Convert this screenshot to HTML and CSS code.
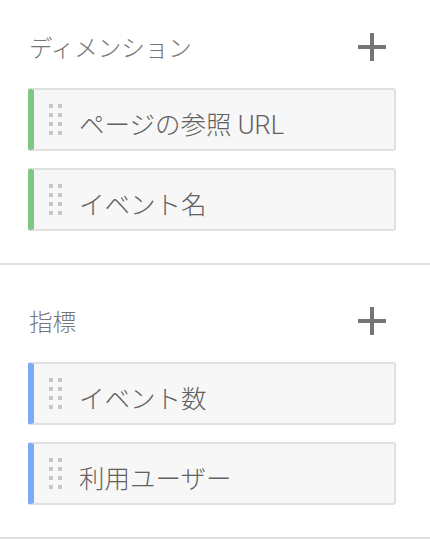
FILE: index.html
```html
<!DOCTYPE html>
<html lang="ja">
<head>
<meta charset="utf-8">
<link rel="stylesheet" href="styles.css">
</head>
<body>
<section class="section section-first">
  <div class="header">
    <span class="title">ディメンション</span>
    <svg class="add" viewBox="0 0 24 24" width="48" height="48"><path d="M19 13h-6v6h-2v-6H5v-2h6V5h2v6h6v2z"/></svg>
  </div>
  <div class="card card-dim">
    <span class="handle"><i></i><i></i><i></i><i></i><i></i><i></i><i></i><i></i></span>
    <span class="label">ページの参照 URL</span>
  </div>
  <div class="card card-dim">
    <span class="handle"><i></i><i></i><i></i><i></i><i></i><i></i><i></i><i></i></span>
    <span class="label">イベント名</span>
  </div>
</section>
<section class="section">
  <div class="header">
    <span class="title">指標</span>
    <svg class="add" viewBox="0 0 24 24" width="48" height="48"><path d="M19 13h-6v6h-2v-6H5v-2h6V5h2v6h6v2z"/></svg>
  </div>
  <div class="card card-met">
    <span class="handle"><i></i><i></i><i></i><i></i><i></i><i></i><i></i><i></i></span>
    <span class="label">イベント数</span>
  </div>
  <div class="card card-met">
    <span class="handle"><i></i><i></i><i></i><i></i><i></i><i></i><i></i><i></i></span>
    <span class="label">利用ユーザー</span>
  </div>
</section>
</body>
</html>
```
FILE: styles.css
```css
html, body {
  margin: 0;
  padding: 0;
  background: #ffffff;
}
body {
  font-family: Roboto, "Noto Sans CJK JP", sans-serif;
  width: 430px;
}
.section {
  display: flex;
  flex-direction: column;
  gap: 17px;
  padding: 32px 34px 32px 28px;
  border-bottom: 2px solid #e0e0e0;
}
.section-first {
  padding-top: 23px;
}
.header {
  display: flex;
  align-items: center;
  justify-content: space-between;
  height: 48px;
}
.title {
  font-size: 23.5px;
  font-weight: 300;
  color: #757575;
  padding-left: 1px;
}
.add {
  fill: #757575;
  display: block;
}
.card {
  display: flex;
  align-items: center;
  height: 59px;
  background: #f7f7f7;
  border: 2px solid #e0e0e0;
  border-left-width: 6px;
  border-radius: 3px;
  padding-left: 15px;
}
.card-dim {
  border-left-color: #81c784;
}
.card-met {
  border-left-color: #7baaf7;
}
.handle {
  display: grid;
  grid-template-columns: 4px 4px;
  grid-auto-rows: 4px;
  column-gap: 5px;
  row-gap: 5px;
  margin-right: 17px;
}
.handle i {
  display: block;
  background: #c6c6c6;
}
.label {
  font-size: 25.5px;
  font-weight: 300;
  color: #616161;
  padding-top: 6px;
}
```
